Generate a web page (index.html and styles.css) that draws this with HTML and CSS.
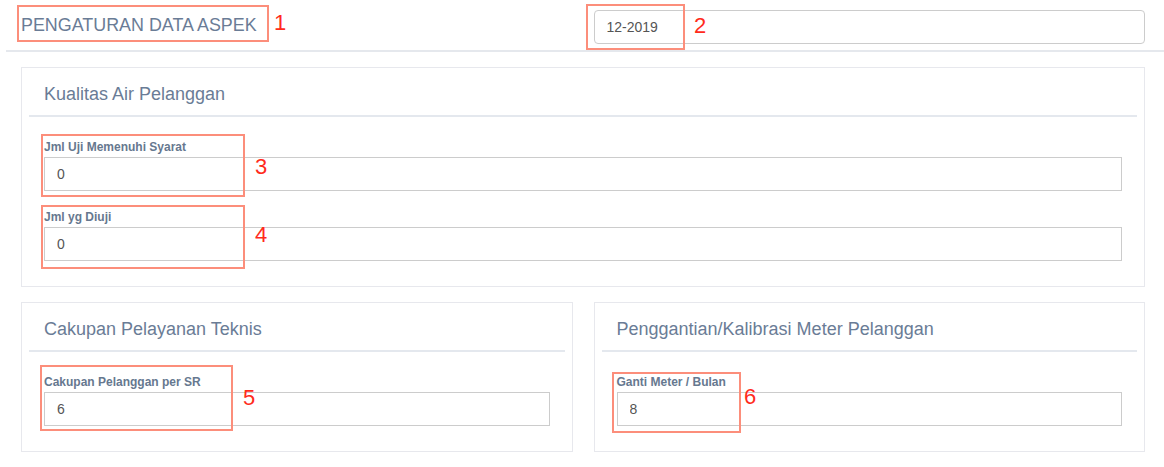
FILE: index.html
```html
<!DOCTYPE html>
<html lang="id">
<head>
<meta charset="utf-8">
<title>Pengaturan Data Aspek</title>
<link rel="stylesheet" href="styles.css">
</head>
<body>
<div class="page">
  <header class="topbar">
    <h1 class="page-title">PENGATURAN DATA ASPEK</h1>
    <div class="period-cell">
      <input class="period-input" type="text" value="12-2019">
    </div>
  </header>

  <main class="content">
    <section class="panel">
      <h2 class="panel-heading">Kualitas Air Pelanggan</h2>
      <div class="panel-body">
        <div class="field">
          <label class="field-label">Jml Uji Memenuhi Syarat</label>
          <input class="field-input" type="text" value="0">
        </div>
        <div class="field">
          <label class="field-label">Jml yg Diuji</label>
          <input class="field-input" type="text" value="0">
        </div>
      </div>
    </section>

    <div class="panel-row">
      <section class="panel">
        <h2 class="panel-heading">Cakupan Pelayanan Teknis</h2>
        <div class="panel-body">
          <div class="field">
            <label class="field-label">Cakupan Pelanggan per SR</label>
            <input class="field-input" type="text" value="6">
          </div>
        </div>
      </section>
      <section class="panel">
        <h2 class="panel-heading">Penggantian/Kalibrasi Meter Pelanggan</h2>
        <div class="panel-body">
          <div class="field">
            <label class="field-label">Ganti Meter / Bulan</label>
            <input class="field-input" type="text" value="8">
          </div>
        </div>
      </section>
    </div>
  </main>

  <div class="mark mark-1"></div><span class="mark-num num-1">1</span>
  <div class="mark mark-2"></div><span class="mark-num num-2">2</span>
  <div class="mark mark-3"></div><span class="mark-num num-3">3</span>
  <div class="mark mark-4"></div><span class="mark-num num-4">4</span>
  <div class="mark mark-5"></div><span class="mark-num num-5">5</span>
  <div class="mark mark-6"></div><span class="mark-num num-6">6</span>
</div>
</body>
</html>
```

FILE: styles.css
```css
* { box-sizing: border-box; }

html, body {
  margin: 0;
  padding: 0;
  background: #ffffff;
}

body {
  font-family: "Liberation Sans", Arial, Helvetica, sans-serif;
  color: #6a7c96;
  width: 1164px;
  height: 467px;
  overflow: hidden;
}

.page {
  position: relative;
  width: 1164px;
  height: 467px;
}

.topbar {
  margin-left: 6px;
  height: 52px;
  padding: 0 19px 0 15px;
  border-bottom: 2px solid #e5e8ed;
  display: grid;
  grid-template-columns: 1fr 1fr;
  column-gap: 21px;
}

.page-title {
  margin: 0;
  align-self: start;
  padding-top: 15px;
  font-size: 17.9px;
  line-height: 20px;
  font-weight: normal;
  color: #6a7c96;
  letter-spacing: 0;
}

.period-cell {
  padding-top: 10px;
}

.period-input {
  display: block;
  width: 100%;
  height: 34px;
  margin: 0;
  padding: 6px 12px;
  font-family: "Liberation Sans", Arial, Helvetica, sans-serif;
  font-size: 14px;
  color: #555555;
  background: #ffffff;
  border: 1px solid #cccccc;
  border-radius: 4px;
  outline: none;
}

.content {
  padding: 15px 19px 0 21px;
}

.panel {
  border: 1px solid #e7e8ed;
  padding: 0 7px;
  background: #ffffff;
}

.panel-row {
  margin-top: 15px;
  display: grid;
  grid-template-columns: 1fr 1fr;
  column-gap: 21px;
}

.panel-heading {
  margin: 0;
  padding: 16px 15px 11px;
  font-size: 18px;
  line-height: 20px;
  font-weight: normal;
  color: #6a7c96;
  border-bottom: 2px solid #e4e8ee;
}

.panel-body {
  padding: 23px 15px 25px;
}

.field + .field {
  margin-top: 19px;
}

.field-label {
  display: block;
  font-size: 12px;
  line-height: 15px;
  font-weight: bold;
  color: #66788f;
  margin-bottom: 2px;
}

.field-input {
  display: block;
  width: 100%;
  height: 34px;
  margin: 0;
  padding: 6px 12px;
  font-family: "Liberation Sans", Arial, Helvetica, sans-serif;
  font-size: 14px;
  color: #555555;
  background: #ffffff;
  border: 1px solid #cccccc;
  border-radius: 0;
  outline: none;
}

/* annotation overlays */
.mark {
  position: absolute;
  border: 2px solid #fc8e7b;
  pointer-events: none;
}

.mark-num {
  position: absolute;
  font-family: "Liberation Sans", Arial, Helvetica, sans-serif;
  font-size: 22px;
  line-height: 22px;
  color: #ff2b1c;
}

.mark-1 { left: 17px; top: 5px; width: 252px; height: 37px; }
.num-1 { left: 274px; top: 12px; }

.mark-2 { left: 586px; top: 4px; width: 99px; height: 46px; }
.num-2 { left: 694px; top: 15px; }

.mark-3 { left: 41px; top: 134px; width: 204px; height: 63px; }
.num-3 { left: 255px; top: 156px; }

.mark-4 { left: 41px; top: 205px; width: 204px; height: 64px; }
.num-4 { left: 255px; top: 224px; }

.mark-5 { left: 40px; top: 365px; width: 193px; height: 66px; }
.num-5 { left: 243px; top: 387px; }

.mark-6 { left: 612px; top: 372px; width: 129px; height: 61px; }
.num-6 { left: 744px; top: 386px; }
```
